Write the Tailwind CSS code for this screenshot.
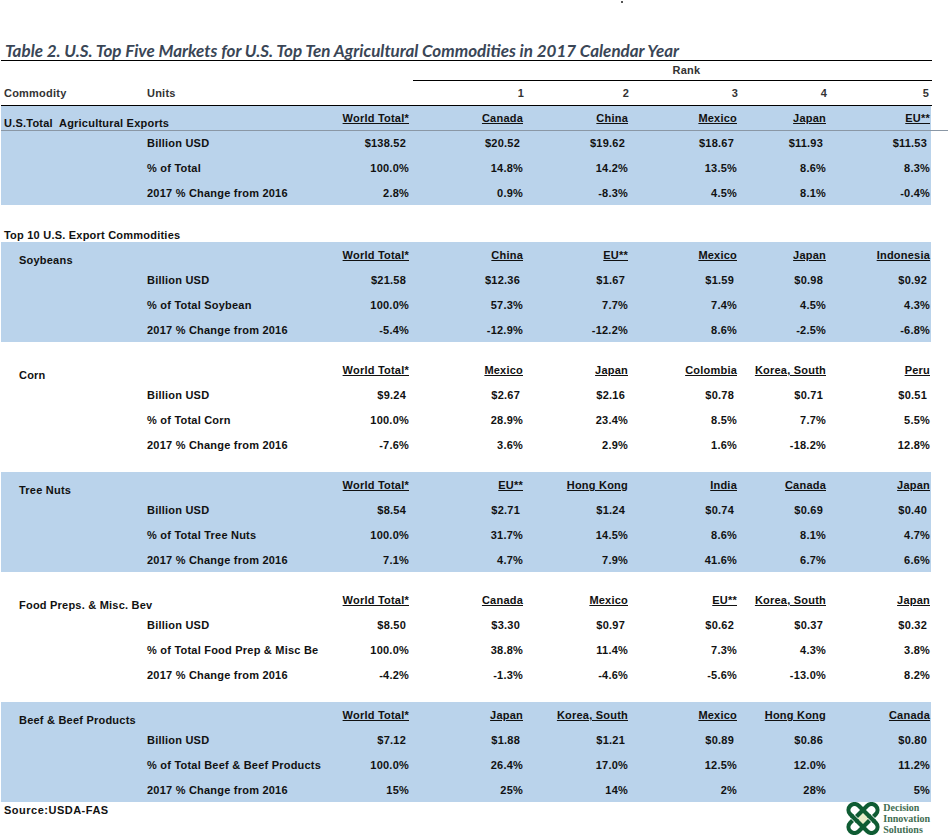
<!DOCTYPE html>
<html lang="en">
<head>
  <meta charset="UTF-8" />
  <title>Table 2</title>
  <script src="https://cdn.jsdelivr.net/npm/@tailwindcss/browser@4"></script>
</head>
<body class="bg-white">
<div id="page" class="relative w-[948px] h-[837px] overflow-hidden font-['Liberation_Sans',sans-serif] text-[11px] tracking-[0.22px] font-bold text-[#111]">
  <!-- stray dot top of the scan -->
  <div class="absolute left-[621px] top-[1px] w-[2px] h-[2px] bg-[#555]"></div>
  <!-- gray rule that runs across the first block -->
  <div class="absolute left-[1px] top-[130px] w-[947px] h-px bg-[#8a97a5]"></div>

  <h1 class="h-[61px] pl-[5px] pt-[41px] text-[17px] leading-[20px] italic tracking-normal font-['Lato',sans-serif] text-[#3a4656]">Table 2. U.S. Top Five Markets for U.S. Top Ten Agricultural Commodities in 2017 Calendar Year</h1>

  <div id="head" class="ml-[1px] w-[931px] border-t border-b border-black -mt-px h-[46px]">
    <div class="ml-[412px] h-[20px] border-b border-black text-center text-[#333] leading-[19px] pl-[28px]">Rank</div>
    <div id="headRow"></div>
  </div>

  <div id="tbl" class="ml-[1px] w-[930px]"></div>

  <div class="flex justify-between w-[930px]">
    <div class="pl-[4px] pt-[1px] leading-[14px] tracking-[0.5px]">Source:USDA-FAS</div>
    <div class="flex items-center gap-[3px] tracking-normal">
      <svg width="34" height="33" viewBox="0 0 34 33" fill="none">
        <polygon points="17,8 25.5,16.5 17,25 8.5,16.5" fill="#e8ecc8"/>
        <g stroke="#0f5c33" stroke-width="4.2">
          <rect x="-1" y="10.5" width="36" height="12" rx="6" transform="rotate(45 17 16.5)"/>
          <rect x="-1" y="10.5" width="36" height="12" rx="6" transform="rotate(-45 17 16.5)"/>
        </g>
        <path d="M6.5 14.5 L10.5 18.5" stroke="#fff" stroke-width="5.6"/>
        <path d="M5.5 13.5 L11.5 19.5" stroke="#0f5c33" stroke-width="4.2"/>
        <path d="M23.5 14.5 L27.5 18.5" stroke="#fff" stroke-width="5.6"/>
        <path d="M22.5 13.5 L28.5 19.5" stroke="#0f5c33" stroke-width="4.2"/>
      </svg>
      <div class="font-['Liberation_Serif',serif] text-[10px] leading-[11px] text-[#3f6d52]">Decision<br>Innovation<br>Solutions</div>
    </div>
  </div>
</div>
<script>
const cols = "grid grid-cols-[146px_173px_90px_114px_105px_109px_89px_104px]";
const blocks = [
  { band: true, name: "U.S.Total  Agricultural Exports", top: true, units: ["Billion USD","% of Total","2017 % Change from 2016"],
    h: ["World Total*","Canada","China","Mexico","Japan","EU**"],
    v: [["$138.52","$20.52","$19.62","$18.67","$11.93","$11.53"],["100.0%","14.8%","14.2%","13.5%","8.6%","8.3%"],["2.8%","0.9%","-8.3%","4.5%","8.1%","-0.4%"]] },
  { band: true, label: "Top 10 U.S. Export Commodities", name: "Soybeans", units: ["Billion USD","% of Total Soybean","2017 % Change from 2016"],
    h: ["World Total*","China","EU**","Mexico","Japan","Indonesia"],
    v: [["$21.58","$12.36","$1.67","$1.59","$0.98","$0.92"],["100.0%","57.3%","7.7%","7.4%","4.5%","4.3%"],["-5.4%","-12.9%","-12.2%","8.6%","-2.5%","-6.8%"]] },
  { band: false, name: "Corn", units: ["Billion USD","% of Total Corn","2017 % Change from 2016"],
    h: ["World Total*","Mexico","Japan","Colombia","Korea, South","Peru"],
    v: [["$9.24","$2.67","$2.16","$0.78","$0.71","$0.51"],["100.0%","28.9%","23.4%","8.5%","7.7%","5.5%"],["-7.6%","3.6%","2.9%","1.6%","-18.2%","12.8%"]] },
  { band: true, name: "Tree Nuts", units: ["Billion USD","% of Total Tree Nuts","2017 % Change from 2016"],
    h: ["World Total*","EU**","Hong Kong","India","Canada","Japan"],
    v: [["$8.54","$2.71","$1.24","$0.74","$0.69","$0.40"],["100.0%","31.7%","14.5%","8.6%","8.1%","4.7%"],["7.1%","4.7%","7.9%","41.6%","6.7%","6.6%"]] },
  { band: false, name: "Food Preps. & Misc. Bev", units: ["Billion USD","% of Total Food Prep & Misc Be","2017 % Change from 2016"],
    h: ["World Total*","Canada","Mexico","EU**","Korea, South","Japan"],
    v: [["$8.50","$3.30","$0.97","$0.62","$0.37","$0.32"],["100.0%","38.8%","11.4%","7.3%","4.3%","3.8%"],["-4.2%","-1.3%","-4.6%","-5.6%","-13.0%","8.2%"]] },
  { band: true, name: "Beef & Beef Products", units: ["Billion USD","% of Total Beef & Beef Products","2017 % Change from 2016"],
    h: ["World Total*","Japan","Korea, South","Mexico","Hong Kong","Canada"],
    v: [["$7.12","$1.88","$1.21","$0.89","$0.86","$0.80"],["100.0%","26.4%","17.0%","12.5%","12.0%","11.2%"],["15%","25%","14%","2%","28%","5%"]] },
];

// header row
const heads = ["Commodity","Units","","1","2","3","4","5"];
document.getElementById("headRow").innerHTML =
  `<div class="${cols} h-[25px] leading-[25px] text-[#333]">` +
  heads.map((t, i) => `<div class="${i < 3 ? "" : i === 7 ? "text-right pr-[2px]" : "text-right"} ${i === 0 ? "pl-[3px]" : ""}">${t}</div>`).join("") + `</div>`;

const tbl = document.getElementById("tbl");
let html = "";
blocks.forEach((b, n) => {
  if (b.label) {
    html += `<div class="h-[37px] pt-[24px] pl-[3px] leading-[13px]">${b.label}</div>`;
  } else if (n > 0) {
    html += `<div class="h-[15px]"></div>`;
  }
  // first block is a pixel shorter, the others start a pixel lower in their header row
  html += `<div class="${b.band ? "bg-[#bad3eb]" : ""} ${b.top ? "h-[99px]" : "h-[100px]"}">`;
  html += `<div class="${cols} ${b.top ? "h-[25px]" : "h-[26px]"}">`;
  html += `<div class="col-span-2 ${b.top ? "pl-[3px] pt-[11px]" : "pl-[18px] pt-[12px]"} leading-[13px] whitespace-pre">${b.name}</div>`;
  b.h.forEach(t => html += `<div class="text-right underline ${b.top ? "pt-[6px]" : "pt-[7px]"} leading-[13px] pr-[1px]">${t}</div>`);
  html += `</div>`;
  b.units.forEach((u, r) => {
    html += `<div class="${cols} ${r === 2 ? "h-[24px]" : "h-[25px]"} leading-[25px]">`;
    html += `<div></div><div class="whitespace-nowrap">${u}</div>`;
    b.v[r].forEach(t => html += `<div class="text-right ${t[0] === "$" ? "pr-[4px]" : "pr-[1px]"}">${t}</div>`);
    html += `</div>`;
  });
  html += `</div>`;
});
tbl.innerHTML = html;
</script>
</body>
</html>
